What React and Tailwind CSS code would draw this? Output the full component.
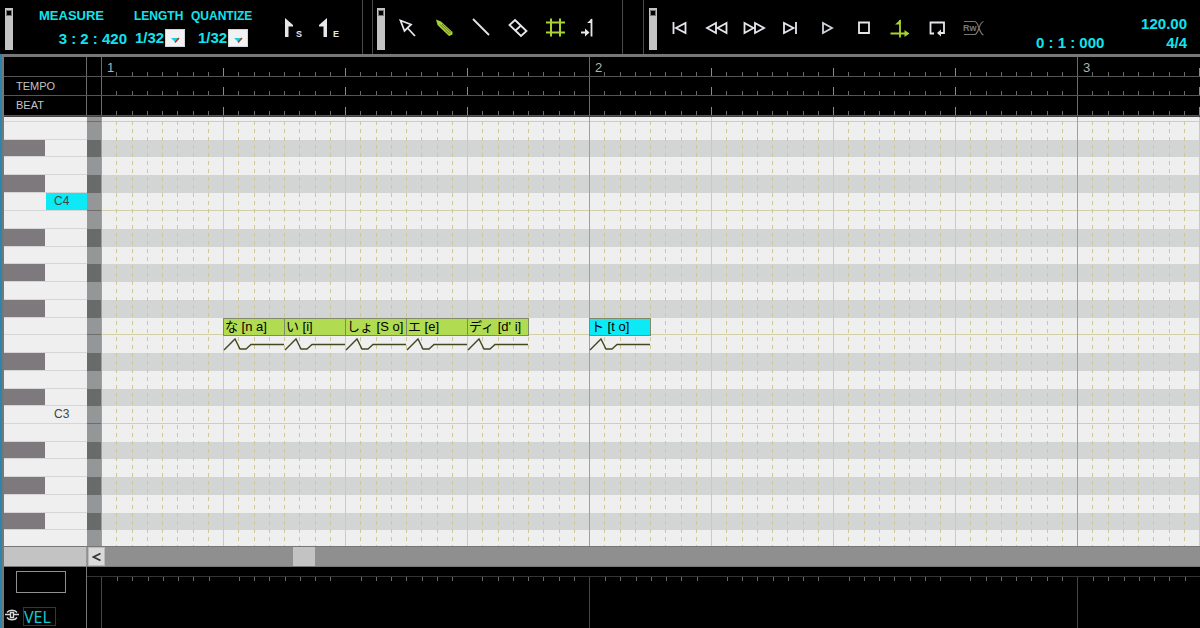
import React, { useState } from 'react';

const BEAT_PX = 122;

const MEASURES = [1, 2, 3];
const BEATS = [0, 1, 2, 3];
const STEPS = [0, 1, 2, 3, 4, 5, 6, 7];

// top to bottom within an octave
const KEYS = ['B', 'A#', 'A', 'G#', 'G', 'F#', 'F', 'E', 'D#', 'D', 'C#', 'C'];

// the outer octaves only show part of their keys
const OCTAVES = [
  { octave: 4, size: 'h-[94px] justify-end', keys: KEYS.slice(6), inner: 'h-[107px]' },
  { octave: 3, size: 'h-[213px]', keys: KEYS, inner: 'h-[213px]' },
  { octave: 2, size: 'flex-1', keys: KEYS.slice(0, 7), inner: 'h-[124px]' },
];

const NOTES = [
  { beat: 1, label: 'な [n a]' },
  { beat: 1.5, label: 'い [i]' },
  { beat: 2, label: 'しょ [S o]' },
  { beat: 2.5, label: 'エ [e]' },
  { beat: 3, label: "ディ [d' i]" },
  { beat: 4, label: 'ト [t o]', selected: true },
];

const TOOLS = [
  {
    name: 'Select',
    color: 'text-gray-200',
    art: <path d="M5.500 4.500 16 8.500 9.500 15ZM12 11.500 20 20" />,
  },
  {
    name: 'Pencil',
    color: 'text-[#a9d32f]',
    art: (
      <>
        <path d="M4 3.500 9 5.500 20.500 16 20.500 18.500 17 20 5.500 9Z" fill="currentColor" stroke="none" />
        <path d="M8 8.500 17.500 18M10 8 19 16.500" stroke="#3c4b12" strokeWidth="0.7" />
      </>
    ),
  },
  { name: 'Line', color: 'text-gray-200', art: <path d="M4 3 20 19" /> },
  {
    name: 'Eraser',
    color: 'text-gray-200',
    art: <path d="M9 4 20.500 15 15 20 3.500 9ZM15 9.500 9.500 14.500" />,
  },
  {
    name: 'Grid snap',
    color: 'text-[#a9d32f]',
    art: <path d="M8 2.500V20.500M17 2.500V20.500M3 6.500H22M3 16.500H22" strokeWidth="2" />,
  },
  {
    name: 'Jump to end',
    color: 'text-gray-200',
    art: (
      <>
        <path d="M11.500 3V20.500M1 16.500H5" strokeWidth="1.8" />
        <path d="M12 2.500 7 7H12ZM5 12.500 9.500 16.500 5 20.500Z" fill="currentColor" stroke="none" />
      </>
    ),
  },
];

const TRANSPORT = [
  { name: 'To start', color: 'text-gray-200', art: <path d="M5.500 6V18M17.500 7V17L8 12Z" /> },
  { name: 'Rewind', color: 'text-gray-200', art: <path d="M11 7V17L2 12ZM21.500 7V17L12.500 12Z" /> },
  { name: 'Forward', color: 'text-gray-200', art: <path d="M2.500 7V17L11.500 12ZM13 7V17L22 12Z" /> },
  { name: 'To end', color: 'text-gray-200', art: <path d="M6 7V17L15.500 12ZM18 6V18" /> },
  { name: 'Play', color: 'text-gray-300', art: <path d="M8 7V17L17 12Z" /> },
  { name: 'Stop', color: 'text-gray-200', art: <path d="M7 6.500H17V17H7Z" /> },
  {
    name: 'Auto scroll',
    color: 'text-[#a9d32f]',
    art: (
      <>
        <path d="M12 4V21.500M2.500 17.500H18" strokeWidth="1.8" />
        <path d="M12.500 3.500 7 8.500H12.500ZM16.500 14 21.500 17.500 16.500 21Z" fill="currentColor" stroke="none" />
      </>
    ),
  },
  {
    name: 'Loop',
    color: 'text-gray-200',
    art: (
      <>
        <path d="M9 17.500H5.500V6.500H19V17H15" />
        <path d="M16 13.500V20.500L12 17Z" fill="currentColor" stroke="none" />
      </>
    ),
  },
  {
    name: 'ReWire',
    color: 'text-[#777]',
    art: (
      <>
        <path d="M2 5.500H13Q15 6 17 12T21.500 19M2 18.500H13Q15 18 17 12T21.500 5.500" strokeWidth="1.2" />
        <text x="1" y="15" fontSize="9" fontWeight="bold" fill="currentColor" stroke="none">Rw</text>
      </>
    ),
  },
];

const IconButton = ({ name, color, art }) => (
  <button type="button" aria-label={name} className={`flex h-9 items-center justify-center ${color}`}>
    <svg viewBox="0 0 24 24" className="h-6 w-6 shrink-0" fill="none" stroke="currentColor" strokeWidth="1.8">
      {art}
    </svg>
  </button>
);

const Grip = () => (
  <div className="h-[42px] w-2 shrink-0 bg-[#c4c4c4] px-px pt-0.5">
    <div className="h-1.5 border border-[#777] bg-black" />
  </div>
);

const StepSelect = ({ label, id }) => {
  const [value, setValue] = useState('1/32');
  return (
    <div className="flex flex-col items-end">
      <label htmlFor={id} className="w-full text-[12px] leading-4">{label}</label>
      <div className="relative mt-[5px] h-[18px] w-[50px]">
        <select
          id={id}
          value={value}
          onChange={(e) => setValue(e.target.value)}
          className="block h-[18px] w-full appearance-none bg-black text-[15px] leading-[18px] font-bold"
        >
          <option>1/8</option>
          <option>1/16</option>
          <option>1/32</option>
        </select>
        <span className="pointer-events-none absolute top-0 right-0 flex h-[18px] w-5 items-center justify-center border border-gray-300 bg-[#f2f2f2]">
          <svg viewBox="0 0 10 6" className="mt-1 h-1.5 w-2.5">
            <path d="M1 1H9L5 5Z" fill="#18cde0" />
            <path d="M9 1 5 5.500" stroke="#a33a20" strokeWidth="1.4" />
          </svg>
        </span>
      </div>
    </div>
  );
};

const Toolbar = () => (
  <header className="flex h-[54px] shrink-0 font-bold text-[#10e4ee]">
    <div className="flex w-[363px] shrink-0 border-r border-[#4a4a4a] pt-2 pl-[5px]">
      <Grip />
      <div className="w-[114px] pl-[26px]">
        <div className="text-[13px] leading-4">MEASURE</div>
        <div className="mt-[5px] text-right text-[15px] leading-[19px] whitespace-nowrap">3 : 2 : 420</div>
      </div>
      <div className="flex pl-[7px]">
        <div className="w-[51px]"><StepSelect id="length" label="LENGTH" /></div>
        <div className="ml-[6px] w-[57px]"><StepSelect id="quantize" label="QUANTIZE" /></div>
      </div>
      <div className="ml-auto flex pr-3 text-gray-200">
        <button type="button" aria-label="Song start" className="h-9 w-9">
          <svg viewBox="0 0 36 36" className="h-9 w-9">
            <path d="M7 10 15 17V18.500H10.500V29H7Z" fill="currentColor" />
            <text x="18" y="29" fontSize="9" fill="currentColor">S</text>
          </svg>
        </button>
        <button type="button" aria-label="Song end" className="h-9 w-9">
          <svg viewBox="0 0 36 36" className="h-9 w-9">
            <path d="M13 10V29H9.500V18.500H5V17Z" fill="currentColor" />
            <text x="19" y="29" fontSize="9" fill="currentColor">E</text>
          </svg>
        </button>
      </div>
    </div>

    <div className="ml-[9px] flex w-[251px] shrink-0 border-x border-[#4a4a4a] pt-2 pl-1">
      <Grip />
      <div className="ml-[3px] grid w-[222px] grid-cols-6 pt-0.5">
        {TOOLS.map((tool) => <IconButton key={tool.name} {...tool} />)}
      </div>
    </div>

    <div className="ml-5 flex flex-1 border-l border-[#4a4a4a] pt-2 pl-[5px]">
      <Grip />
      <div className="ml-[5px] grid w-[330px] shrink-0 grid-cols-9 pt-0.5">
        {TRANSPORT.map((item) => <IconButton key={item.name} {...item} />)}
      </div>
      <div className="ml-auto flex items-end pr-[13px] pb-0.5 text-[15px] leading-[19px] whitespace-nowrap">
        <div className="w-[103px]">0 : 1 : 000</div>
        <div className="w-12 text-right">
          <div>120.00</div>
          <div>4/4</div>
        </div>
      </div>
    </div>
  </header>
);

const RulerTrack = ({ numbered }) => (
  <div className="flex min-w-0 flex-1 overflow-hidden">
    {MEASURES.map((measure) => (
      <div key={measure} className="flex w-[488px] shrink-0">
        {BEATS.map((beat) => (
          <div key={beat} className="flex flex-1 items-end">
            {STEPS.map((step) => (
              <div key={step} className="flex h-full flex-1 items-end">
                {step > 0 && <div className="h-1 w-px bg-[#6a6a6a]" />}
                {step === 0 && beat > 0 && <div className="h-2 w-px bg-[#8a8a8a]" />}
                {step === 0 && beat === 0 && (
                  <div className="h-full w-px bg-[#6a6a6a]">
                    {numbered && <span className="ml-1.5 block text-[13px] leading-[22px] text-[#b4b4b4]">{measure}</span>}
                  </div>
                )}
              </div>
            ))}
          </div>
        ))}
      </div>
    ))}
  </div>
);

const RulerRow = ({ label, size, numbered }) => (
  <div className={`flex border-b border-[#555] ${size}`}>
    <div className="flex w-[83px] shrink-0 items-center border-r border-[#6a6a6a] pl-3 text-[11px] text-[#c4c4c4]">{label}</div>
    <div className="w-[14px] shrink-0" />
    <RulerTrack numbered={numbered} />
  </div>
);

const KeyRow = ({ name, octave }) => {
  const black = name.includes('#');
  const edge = name === 'C' || name === 'F';
  return (
    <div className="flex flex-1">
      <div className="flex w-[83px] shrink-0 border-b border-[#d6d6d6] bg-[#efefef]">
        <div className={`w-[41px] ${black ? 'bg-[#7d797c]' : ''}`} />
        {name === 'C' && (
          <div className={`ml-px flex flex-1 items-center pb-0.5 pl-2 text-[12px] leading-none text-[#444] ${octave === 4 ? 'bg-[#0deaf5]' : ''}`}>
            C{octave}
          </div>
        )}
      </div>
      <div className={`w-[14px] shrink-0 ${black ? 'bg-[#686b6a]' : 'bg-[#959697]'} ${edge ? 'border-b border-[#6c6e6e]' : ''}`} />
      <div className={`flex-1 ${black ? 'bg-[#d3d4d4]' : 'bg-[#efefef]'} ${edge ? 'border-b border-[#d3cfa8]' : ''}`} />
    </div>
  );
};

const GridLines = () => (
  <div className="flex h-full">
    {MEASURES.map((measure) => (
      <div key={measure} className="flex w-[488px] shrink-0">
        {BEATS.map((beat) => (
          <div key={beat} className="flex flex-1">
            {STEPS.map((step) => (
              <div key={step} className="flex-1">
                {step > 0 && (
                  <div className="h-full w-px bg-[repeating-linear-gradient(to_bottom,transparent_0_4px,#cdc894_4px_8px)]" />
                )}
                {step === 0 && beat > 0 && <div className="h-full w-px bg-[#d0cca4]" />}
                {step === 0 && beat === 0 && <div className="h-full w-px bg-[#a39f96]" />}
              </div>
            ))}
          </div>
        ))}
      </div>
    ))}
  </div>
);

const Note = ({ beat, label, selected }) => (
  <div className="absolute top-[201px] w-[62px]" style={{ left: beat * BEAT_PX }}>
    <div
      className={`flex h-[18px] items-center border border-[#7f8a6a] pb-px pl-px text-[13px] leading-none whitespace-nowrap text-black ${selected ? 'bg-[#0deaf5]' : 'bg-[#b1db50]'}`}
    >
      {label}
    </div>
    <svg viewBox="0 0 62 18" className="h-[18px] w-[62px]" fill="none" stroke="#414822" strokeWidth="1.4">
      <path d="M1 14 12 3 17 13H23L28 8.500H61" />
    </svg>
  </div>
);

const PianoRoll = () => (
  <main className="relative flex min-h-0 flex-1 flex-col overflow-hidden">
    {OCTAVES.map(({ octave, size, keys, inner }) => (
      <div key={octave} className={`flex flex-col overflow-hidden ${size}`}>
        <div className={`flex shrink-0 flex-col ${inner}`}>
          {keys.map((name) => <KeyRow key={name} name={name} octave={octave} />)}
        </div>
      </div>
    ))}
    <div className="absolute inset-y-0 right-0 left-[97px] overflow-hidden">
      <GridLines />
      {NOTES.map((note) => <Note key={note.beat} {...note} />)}
    </div>
  </main>
);

const ScrollBar = () => (
  <div className="flex h-[21px] shrink-0 border-y border-[#777] bg-[#8f8f8f]">
    <div className="w-[83px] shrink-0 border-r border-[#999] bg-[#c3c3c3]" />
    <button type="button" aria-label="Scroll left" className="ml-px flex w-[17px] items-center justify-center border border-[#bbb] bg-[#dadada]">
      <svg viewBox="0 0 10 10" className="h-2.5 w-2.5" fill="none" stroke="#333" strokeWidth="1.6">
        <path d="M8.500 1.500 1.500 5 8.500 8.500" />
      </svg>
    </button>
    <div className="ml-[188px] w-[22px] bg-[#c3c3c3]" />
  </div>
);

const ControlPane = () => (
  <footer className="flex h-[61px] shrink-0">
    <div className="w-[83px] shrink-0 border-r border-[#777] pt-1">
      <div className="ml-3 h-[22px] w-[50px] border border-[#909090]" />
      <div className="mt-[14px] flex items-center gap-1 pl-px">
        <svg viewBox="0 0 14 12" className="mb-1 h-3 w-3.5" fill="none" stroke="#d8d8d8" strokeWidth="1.4">
          <path d="M2 3.500C4 0.500 10 0.500 12 3.500M0 5.500H5M9 5.500H14M2 8.500C4 11.500 10 11.500 12 8.500" />
          <path d="M5.500 3.500V8.500H8.500V3.500Z" />
        </svg>
        <button
          type="button"
          className="h-[19px] w-[33px] border border-[#174448] text-left font-['Noto_Sans',sans-serif] text-[16px] leading-[16px] text-[#12c9d0]"
        >
          VEL
        </button>
      </div>
    </div>
    <div className="mt-[9px] flex min-w-0 flex-1 overflow-hidden border-t border-[#333] pl-[14px]">
      {MEASURES.map((measure) => (
        <div key={measure} className="flex w-[488px] shrink-0 border-l border-[#444]">
          {BEATS.map((beat) => (
            <div key={beat} className="flex flex-1">
              {STEPS.map((step) => (
                <div key={step} className="flex-1">
                  {step > 0 && <div className="h-1 w-px bg-[#6a6a6a]" />}
                </div>
              ))}
            </div>
          ))}
        </div>
      ))}
    </div>
  </footer>
);

const App = () => (
  <div className="flex h-screen flex-col overflow-hidden bg-black font-['Liberation_Sans','Noto_Sans_CJK_JP',sans-serif]">
    <Toolbar />
    <div className="flex min-h-0 flex-1 flex-col border-l-2 border-[#2a86ac]">
      <div className="flex min-h-0 flex-1 flex-col border-t-[3px] border-l-2 border-[#777]">
        <div className="shrink-0 border-b border-[#444]">
          <RulerRow size="h-[20px]" numbered />
          <RulerRow label="TEMPO" size="h-[19px]" />
          <RulerRow label="BEAT" size="h-[20px]" />
        </div>
        <PianoRoll />
        <ScrollBar />
        <ControlPane />
      </div>
    </div>
  </div>
);

export default App;
